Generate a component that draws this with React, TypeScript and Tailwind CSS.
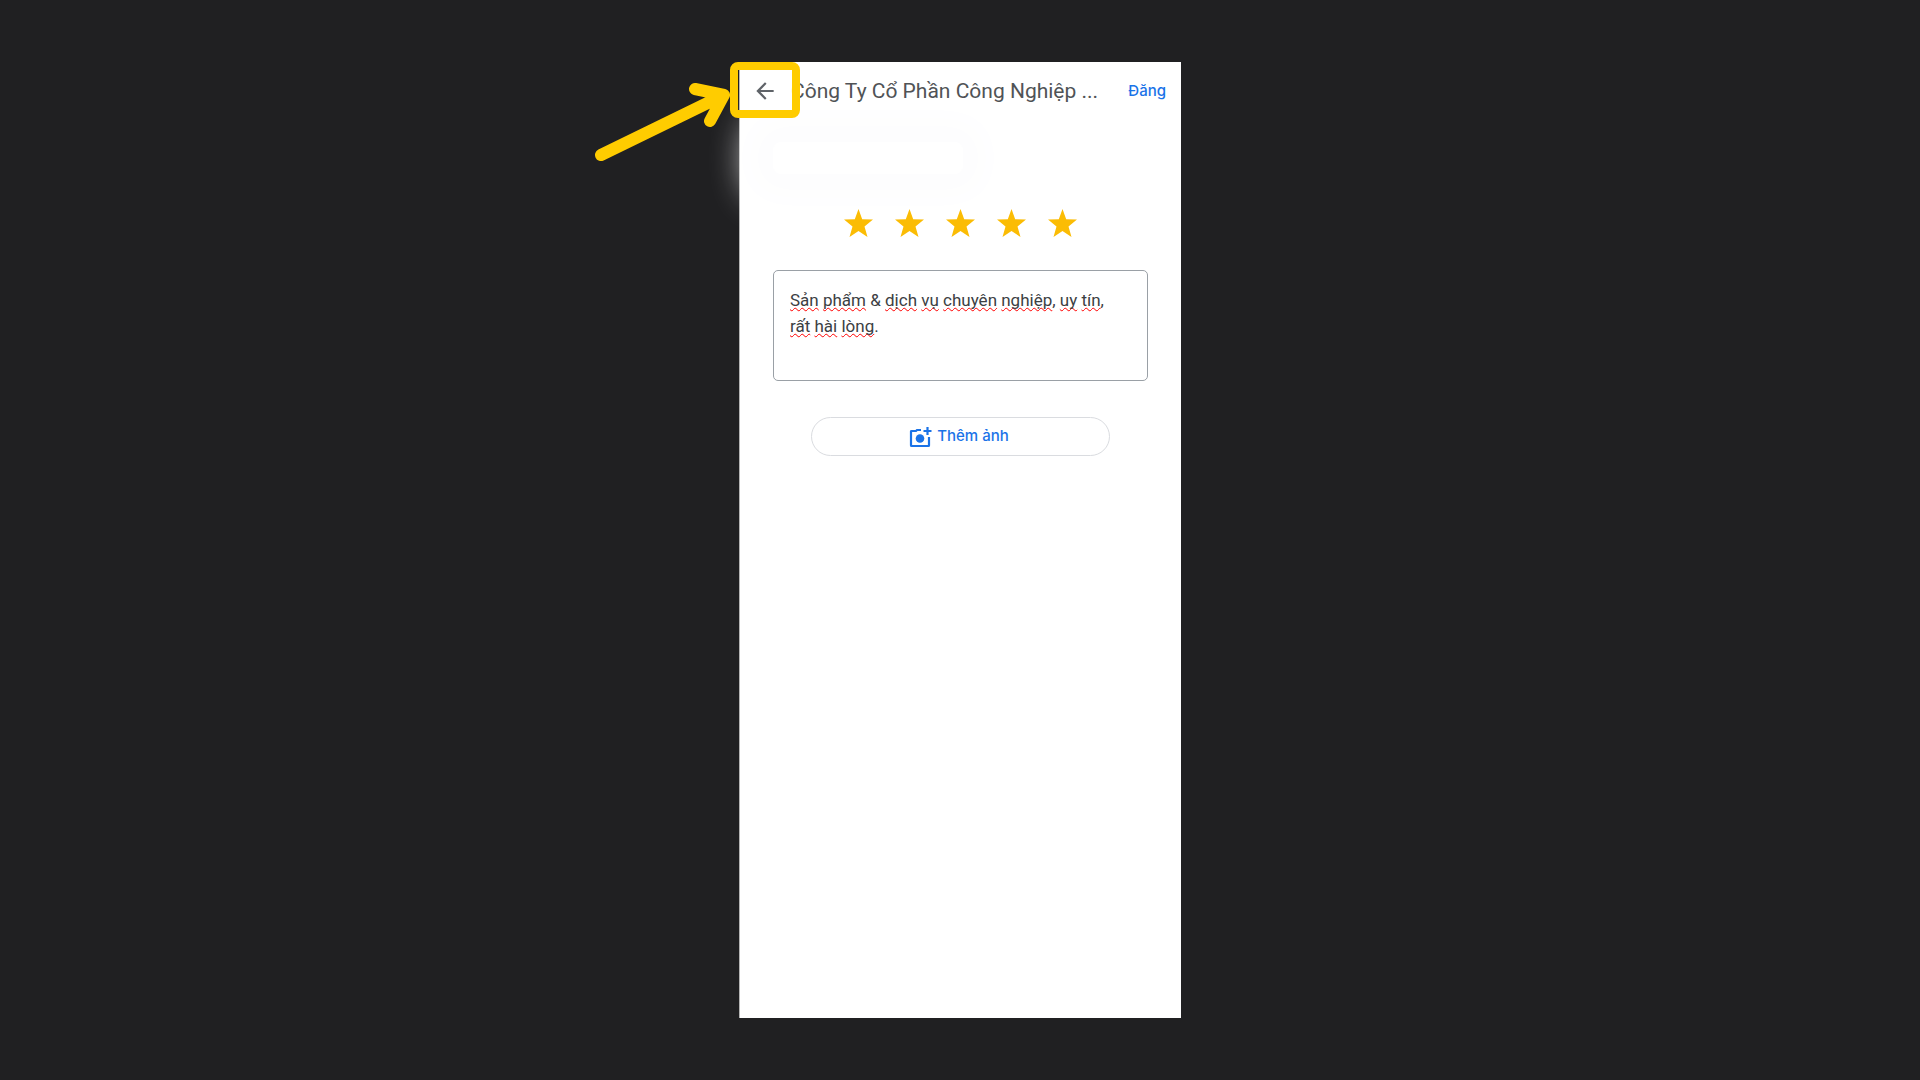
import { useState } from "react";

const comment = [
  { text: "Sản", flagged: true },
  { text: " " },
  { text: "phẩm", flagged: true },
  { text: " & " },
  { text: "dịch", flagged: true },
  { text: " " },
  { text: "vụ", flagged: true },
  { text: " " },
  { text: "chuyên", flagged: true },
  { text: " " },
  { text: "nghiệp", flagged: true },
  { text: ", " },
  { text: "uy", flagged: true },
  { text: " " },
  { text: "tín", flagged: true },
  { text: ", " },
  { text: "rất", flagged: true },
  { text: " " },
  { text: "hài", flagged: true },
  { text: " " },
  { text: "lòng", flagged: true },
  { text: "." },
];

function StarRating() {
  const [rating, setRating] = useState(5);

  return (
    <div className="flex justify-center gap-4">
      {[1, 2, 3, 4, 5].map((value) => (
        <button
          key={value}
          type="button"
          aria-label={`${value} sao`}
          onClick={() => setRating(value)}
          className={value <= rating ? "text-[#fbbc04]" : "text-gray-300"}
        >
          <svg viewBox="0 0 35 35" fill="currentColor" className="size-[35px]">
            <path d="M17.500 3 21.200 13.200 32 13.600 23.500 20.400 26.500 31 17.500 25 8.500 31 11.500 20.400 3 13.600 13.800 13.200z" />
          </svg>
        </button>
      ))}
    </div>
  );
}

function CommentBox() {
  const original = comment.map((part) => part.text).join("");
  const [value, setValue] = useState(original);

  return (
    <div className="grid rounded-[5px] border border-[#9aa0a6] text-[17px] leading-[26px]">
      {/* spelling marks drawn under the text */}
      <div
        aria-hidden="true"
        className="col-start-1 row-start-1 pt-4 pr-8 pl-4 whitespace-pre-wrap text-transparent"
      >
        {value === original &&
          comment.map((part, i) => (
            <span
              key={i}
              className={
                part.flagged
                  ? "underline decoration-[#ff0000] decoration-wavy decoration-1 underline-offset-1 [text-decoration-skip-ink:none]"
                  : ""
              }
            >
              {part.text}
            </span>
          ))}
      </div>
      <textarea
        aria-label="Nội dung đánh giá"
        value={value}
        onChange={(e) => setValue(e.target.value)}
        spellCheck={false}
        className="col-start-1 row-start-1 h-[109px] w-full resize-none pt-4 pr-8 pl-4 text-[#3c4043] focus:outline-none"
      />
    </div>
  );
}

export default function App() {
  return (
    <div className="flex min-h-screen justify-center bg-[#202022] py-[62px] font-['Roboto','Noto_Sans',sans-serif]">
      <main className="relative w-full max-w-[442px] border-l border-[#b4b4b4] bg-white">
        <header className="flex h-[58px] items-center pr-[15px] pl-3">
          <button
            type="button"
            aria-label="Quay lại"
            className="flex w-[39px] shrink-0 text-[#5f6368]"
          >
            <svg viewBox="0 0 24 24" fill="currentColor" className="size-[26px]">
              <path d="M20 11H7.83l5.59-5.59L12 4l-8 8 8 8 1.41-1.41L7.83 13H20z" />
            </svg>
          </button>
          <h1 className="flex-1 text-[21px] leading-7 whitespace-nowrap text-[#505356]">
            Công Ty Cổ Phần Công Nghiệp ...
          </h1>
          <button
            type="button"
            className="font-['Inter','Noto_Sans',sans-serif] text-[15px] font-medium text-[#1a73e8]"
          >
            Đăng
          </button>
        </header>

        <div className="px-[33px]">
          <div className="mt-[22px] h-8 w-[190px] rounded-lg bg-white shadow-[0_0_36px_24px_#fdfdfe]" />
          <div className="mt-8">
            <StarRating />
          </div>
          <div className="mt-[29px]">
            <CommentBox />
          </div>
          <button
            type="button"
            className="mx-auto mt-9 flex h-[39px] w-[299px] items-center justify-center gap-[5px] rounded-full border border-[#dadce0] pr-1 font-['Inter','Noto_Sans',sans-serif] text-[15px] font-medium text-[#1a73e8]"
          >
            <svg viewBox="0 0 24 24" className="size-6">
              <path
                d="M13 5H9L8 6H3.600Q3 6 3 6.600V20.400Q3 21 3.600 21H20.400Q21 21 21 20.400V12"
                fill="none"
                stroke="currentColor"
                strokeWidth="2.200"
              />
              <circle cx="12" cy="13.500" r="4.300" fill="currentColor" />
              <path d="M19.500 2v8M15.500 6h8" stroke="currentColor" strokeWidth="2.200" />
            </svg>
            Thêm ảnh
          </button>
        </div>

        {/* callout over the back button */}
        <div className="pointer-events-none absolute top-0 -left-[10px] h-14 w-[70px] rounded-lg border-8 border-[#ffcc00]" />
        <svg
          viewBox="0 0 140 80"
          className="pointer-events-none absolute top-5 -left-[150px] w-[140px]"
          fill="none"
          stroke="#ffcc00"
          strokeWidth="12"
          strokeLinecap="round"
          strokeLinejoin="round"
        >
          <path d="M11 73 134 13M105 7l29 6-14 26" />
        </svg>
      </main>
    </div>
  );
}
